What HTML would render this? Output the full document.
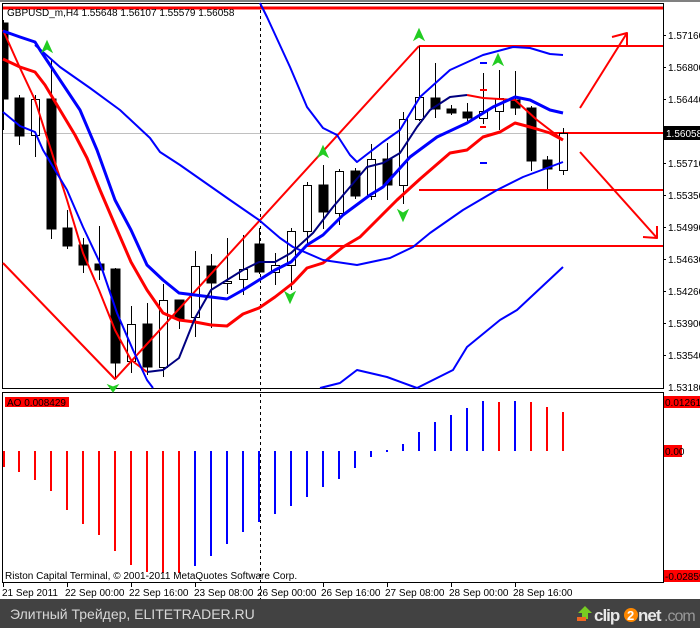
<!DOCTYPE html>
<html><head><meta charset="utf-8"><style>
html,body{margin:0;padding:0;background:#fff;width:700px;height:628px;overflow:hidden}
svg{display:block}
text{font-family:"Liberation Sans",sans-serif;font-size:10px}
</style></head><body>
<svg width="700" height="628" viewBox="0 0 700 628" xmlns="http://www.w3.org/2000/svg">
<rect x="0" y="0" width="700" height="628" fill="#fff"/>
<rect x="0" y="0" width="700" height="2" fill="#808080"/>
<rect x="2.5" y="3.5" width="661" height="385" fill="none" stroke="#000"/>
<rect x="2.5" y="392.5" width="661" height="190" fill="none" stroke="#000"/>
<line x1="3" y1="133.5" x2="663" y2="133.5" stroke="#c0c0c0"/>
<line x1="260.5" y1="4" x2="260.5" y2="600" stroke="#000" stroke-dasharray="3,3"/>
<g stroke="#f00" stroke-width="2" fill="none">
<line x1="3" y1="8" x2="663" y2="8" stroke-width="3"/>
<line x1="419" y1="46" x2="663" y2="46"/>
<line x1="548" y1="133" x2="663" y2="133"/>
<line x1="419" y1="190" x2="663" y2="190"/>
<line x1="307" y1="246" x2="663" y2="246"/>
</g>
<g stroke="#000" stroke-width="1">
<line x1="3.5" y1="20" x2="3.5" y2="130"/><rect x="3" y="23" width="5" height="76" fill="#000"/>
<line x1="19.5" y1="95" x2="19.5" y2="145"/><rect x="15" y="98" width="9" height="38" fill="#000"/>
<line x1="35.5" y1="95" x2="35.5" y2="157"/><rect x="31.5" y="99.5" width="8" height="36" fill="#fff"/>
<line x1="51.5" y1="60" x2="51.5" y2="239"/><rect x="47" y="99" width="9" height="130" fill="#000"/>
<line x1="67.5" y1="210" x2="67.5" y2="249"/><rect x="63" y="228" width="9" height="18" fill="#000"/>
<line x1="83.5" y1="238" x2="83.5" y2="273"/><rect x="79" y="245" width="9" height="20" fill="#000"/>
<line x1="99.5" y1="226" x2="99.5" y2="280"/><rect x="95" y="264" width="9" height="6" fill="#000"/>
<line x1="115.5" y1="268" x2="115.5" y2="379"/><rect x="111" y="269" width="9" height="94" fill="#000"/>
<line x1="131.5" y1="306" x2="131.5" y2="373"/><rect x="127.5" y="324.5" width="8" height="37" fill="#fff"/>
<line x1="147.5" y1="303" x2="147.5" y2="375"/><rect x="143" y="324" width="9" height="43" fill="#000"/>
<line x1="163.5" y1="284" x2="163.5" y2="377"/><rect x="159.5" y="300.5" width="8" height="67" fill="#fff"/>
<line x1="179.5" y1="300" x2="179.5" y2="329"/><rect x="175" y="300" width="9" height="19" fill="#000"/>
<line x1="195.5" y1="251" x2="195.5" y2="337"/><rect x="191.5" y="266.5" width="8" height="51" fill="#fff"/>
<line x1="211.5" y1="254" x2="211.5" y2="328"/><rect x="207" y="266" width="9" height="17" fill="#000"/>
<line x1="227.5" y1="238" x2="227.5" y2="294"/><rect x="223.5" y="281.5" width="8" height="2" fill="#fff"/>
<line x1="243.5" y1="235" x2="243.5" y2="295"/><rect x="239.5" y="269.5" width="8" height="10" fill="#fff"/>
<line x1="259.5" y1="228" x2="259.5" y2="274"/><rect x="255" y="244" width="9" height="28" fill="#000"/>
<line x1="275.5" y1="253" x2="275.5" y2="285"/><rect x="271.5" y="265.5" width="8" height="7" fill="#fff"/>
<line x1="291.5" y1="228" x2="291.5" y2="290"/><rect x="287.5" y="231.5" width="8" height="34" fill="#fff"/>
<line x1="307.5" y1="182" x2="307.5" y2="245"/><rect x="303.5" y="185.5" width="8" height="46" fill="#fff"/>
<line x1="323.5" y1="165" x2="323.5" y2="229"/><rect x="319" y="185" width="9" height="27" fill="#000"/>
<line x1="339.5" y1="169" x2="339.5" y2="225"/><rect x="335.5" y="171.5" width="8" height="42" fill="#fff"/>
<line x1="355.5" y1="168" x2="355.5" y2="199"/><rect x="351" y="171" width="9" height="25" fill="#000"/>
<line x1="371.5" y1="144" x2="371.5" y2="200"/><rect x="367.5" y="159.5" width="8" height="37" fill="#fff"/>
<line x1="387.5" y1="143" x2="387.5" y2="200"/><rect x="383" y="159" width="9" height="26" fill="#000"/>
<line x1="403.5" y1="112" x2="403.5" y2="204"/><rect x="399.5" y="119.5" width="8" height="66" fill="#fff"/>
<line x1="419.5" y1="46" x2="419.5" y2="121"/><rect x="415.5" y="97.5" width="8" height="22" fill="#fff"/>
<line x1="435.5" y1="63" x2="435.5" y2="118"/><rect x="431" y="98" width="9" height="11" fill="#000"/>
<line x1="451.5" y1="105" x2="451.5" y2="115"/><rect x="447" y="109" width="9" height="4" fill="#000"/>
<line x1="467.5" y1="103" x2="467.5" y2="121"/><rect x="463" y="112" width="9" height="6" fill="#000"/>
<line x1="483.5" y1="73" x2="483.5" y2="124"/><rect x="479.5" y="111.5" width="8" height="7" fill="#fff"/>
<line x1="499.5" y1="70" x2="499.5" y2="130"/><rect x="495.5" y="98.5" width="8" height="13" fill="#fff"/>
<line x1="515.5" y1="71" x2="515.5" y2="115"/><rect x="511" y="100" width="9" height="8" fill="#000"/>
<line x1="531.5" y1="106" x2="531.5" y2="171"/><rect x="527" y="108" width="9" height="53" fill="#000"/>
<line x1="547.5" y1="156" x2="547.5" y2="189"/><rect x="543" y="160" width="9" height="9" fill="#000"/>
<line x1="563.5" y1="128" x2="563.5" y2="175"/><rect x="559.5" y="133.5" width="8" height="37" fill="#fff"/>
</g>
<g fill="none" stroke-linejoin="round">
<polyline stroke="#f00" stroke-width="2" points="3,263 115,379 419,46"/>
<polyline stroke="#f00" stroke-width="2" points="3,30 20,68 35,100 51,150 67,200 83,253 99,290 115,330 131,360 147,372"/>
<polyline stroke="#f00" stroke-width="3" points="3,59 20,67 35,72 45,85 60,110 75,135 87,158 100,190 115,225 131,262 147,290 163,313 179,320 195,322 211,325 227,326 243,314 259,308 275,297 293,283 307,268 323,263 343,247 360,237 380,217 397,200 420,179 450,153 467,150 483,137 500,132 515,123 530,127 550,133 563,140"/>
<polyline stroke="#f00" stroke-width="2" points="467,95 483,98 515,100 537,120 563,140"/>
<polyline stroke="#00f" stroke-width="3" points="3,31 20,37 35,42 40,50 60,80 80,110 97,150 115,200 131,230 147,265 163,280 179,293 195,295 211,297 227,299 243,290 259,280 275,270 291,262 307,245 323,235 343,215 370,195 383,187 410,157 437,137 467,123 493,107 515,97 530,100 550,110 563,113"/>
<polyline stroke="#00f" stroke-width="2" points="3,112 20,126 35,132 43,150 67,190 83,227 100,263 117,313 133,350 147,380 153,388"/>
<polyline stroke="#00f" stroke-width="2" points="35,45 60,67 90,88 120,110 150,138 160,152 180,165 230,200 259,220 280,238 293,247 323,260 357,265 390,258 413,247 430,233 463,210 497,190 523,177 563,162"/>
<polyline stroke="#00f" stroke-width="2" points="260,3 267,17 290,67 307,107 323,128 337,135 350,155 357,162 383,142 400,130 420,97 450,70 483,55 513,47 530,48 550,54 563,55"/>
<polyline stroke="#00f" stroke-width="2" points="320,388 340,383 357,370 387,377 417,388 453,370 467,347 500,320 517,310 563,267"/>
<polyline stroke="#000080" stroke-width="2" points="147,372 163,370 179,358 195,318 211,290 227,280 243,270 259,262 275,262 291,253 313,233 333,207 350,187 367,167 383,163 400,153 417,127 430,110 450,97 467,95"/>
<polyline stroke="#f00" stroke-width="2" points="580,108 627,33"/>
<polyline stroke="#f00" stroke-width="2" points="612,37 627,33 627,47"/>
<polyline stroke="#f00" stroke-width="2" points="580,152 657,238"/>
<polyline stroke="#f00" stroke-width="2" points="643,237 657,238 657,226"/>
</g>
<g fill="#2c2" stroke="#2c2">
<path d="M47,41 L42,52 L47,49 L52,52 Z"/>
<path d="M323,146 L318,157 L323,154 L328,157 Z"/>
<path d="M419,29 L414,40 L419,37 L424,40 Z"/>
<path d="M498,54 L493,65 L498,62 L503,65 Z"/>
<path d="M290,303 L285,292 L290,295 L295,292 Z"/>
<path d="M403,221 L398,210 L403,213 L408,210 Z"/>
<path d="M113,392 L108,385 L113,387 L118,385 Z"/>
</g>
<g stroke="#f00" stroke-width="2"><line x1="480" y1="90" x2="487" y2="90"/><line x1="480" y1="127" x2="486" y2="127"/></g>
<g stroke="#00f" stroke-width="2"><line x1="480" y1="63" x2="487" y2="63"/><line x1="480" y1="163" x2="487" y2="163"/></g>
<text x="7" y="16" fill="#000">GBPUSD_m,H4  1.55648 1.56107 1.55579 1.56058</text>
<g fill="#000">
<text x="668" y="39">1.57160</text>
<text x="668" y="71">1.56800</text>
<text x="668" y="103">1.56440</text>
<text x="668" y="167">1.55710</text>
<text x="668" y="199">1.55350</text>
<text x="668" y="231">1.54990</text>
<text x="668" y="263">1.54630</text>
<text x="668" y="295">1.54260</text>
<text x="668" y="327">1.53900</text>
<text x="668" y="359">1.53540</text>
<text x="668" y="391">1.53180</text>
</g>
<g stroke="#000"><line x1="663" y1="35.5" x2="666" y2="35.5"/><line x1="663" y1="67.5" x2="666" y2="67.5"/><line x1="663" y1="99.5" x2="666" y2="99.5"/><line x1="663" y1="163.5" x2="666" y2="163.5"/><line x1="663" y1="195.5" x2="666" y2="195.5"/><line x1="663" y1="227.5" x2="666" y2="227.5"/><line x1="663" y1="259.5" x2="666" y2="259.5"/><line x1="663" y1="291.5" x2="666" y2="291.5"/><line x1="663" y1="323.5" x2="666" y2="323.5"/><line x1="663" y1="355.5" x2="666" y2="355.5"/></g>
<rect x="664" y="126" width="36" height="14" fill="#000"/>
<text x="666" y="137" fill="#fff">1.56058</text>
<rect x="5" y="397" width="64" height="10" fill="#f00"/>
<text x="7" y="406" fill="#000">AO 0.008429</text>
<rect x="664" y="396" width="36" height="12" fill="#f00"/><text x="665" y="406" fill="#000">0.012615</text>
<rect x="664" y="445" width="18" height="12" fill="#f00"/><text x="665" y="455" fill="#000">0.00</text>
<rect x="664" y="570" width="36" height="12" fill="#f00"/><text x="665" y="580" fill="#000">-0.02859</text>
<g stroke-width="2">
<g stroke="#f00">
<line x1="4" y1="451" x2="4" y2="467"/><line x1="19" y1="451" x2="19" y2="472"/><line x1="35" y1="451" x2="35" y2="480"/><line x1="51" y1="451" x2="51" y2="491"/><line x1="67" y1="451" x2="67" y2="510"/><line x1="83" y1="451" x2="83" y2="524"/><line x1="99" y1="451" x2="99" y2="535"/><line x1="115" y1="451" x2="115" y2="551"/><line x1="131" y1="451" x2="131" y2="565"/><line x1="147" y1="451" x2="147" y2="572"/><line x1="163" y1="451" x2="163" y2="573"/><line x1="179" y1="451" x2="179" y2="573"/>
<line x1="499" y1="451" x2="499" y2="402"/><line x1="531" y1="451" x2="531" y2="402"/><line x1="547" y1="451" x2="547" y2="407"/><line x1="563" y1="451" x2="563" y2="412"/>
</g>
<g stroke="#00f">
<line x1="195" y1="451" x2="195" y2="566"/><line x1="211" y1="451" x2="211" y2="556"/><line x1="227" y1="451" x2="227" y2="544"/><line x1="243" y1="451" x2="243" y2="532"/><line x1="259" y1="451" x2="259" y2="522"/><line x1="275" y1="451" x2="275" y2="514"/><line x1="291" y1="451" x2="291" y2="506"/><line x1="307" y1="451" x2="307" y2="497"/><line x1="323" y1="451" x2="323" y2="487"/><line x1="339" y1="451" x2="339" y2="479"/><line x1="355" y1="451" x2="355" y2="468"/><line x1="371" y1="451" x2="371" y2="457"/><line x1="387" y1="450" x2="387" y2="452"/>
<line x1="403" y1="451" x2="403" y2="444"/><line x1="419" y1="451" x2="419" y2="432"/><line x1="435" y1="451" x2="435" y2="422"/><line x1="451" y1="451" x2="451" y2="415"/><line x1="467" y1="451" x2="467" y2="408"/><line x1="483" y1="451" x2="483" y2="401"/><line x1="515" y1="451" x2="515" y2="401"/>
</g>
</g>
<text x="5" y="579" fill="#000">Riston Capital Terminal, © 2001-2011 MetaQuotes Software Corp.</text>
<g stroke="#000"><line x1="3.5" y1="583" x2="3.5" y2="587"/><line x1="67.5" y1="583" x2="67.5" y2="587"/><line x1="131.5" y1="583" x2="131.5" y2="587"/><line x1="195.5" y1="583" x2="195.5" y2="587"/><line x1="323.5" y1="583" x2="323.5" y2="587"/><line x1="387.5" y1="583" x2="387.5" y2="587"/><line x1="451.5" y1="583" x2="451.5" y2="587"/><line x1="515.5" y1="583" x2="515.5" y2="587"/></g>
<g fill="#000">
<text x="2" y="596">21 Sep 2011</text>
<text x="65" y="596">22 Sep 00:00</text>
<text x="129" y="596">22 Sep 16:00</text>
<text x="194" y="596">23 Sep 08:00</text>
<text x="257" y="596">26 Sep 00:00</text>
<text x="321" y="596">26 Sep 16:00</text>
<text x="385" y="596">27 Sep 08:00</text>
<text x="449" y="596">28 Sep 00:00</text>
<text x="513" y="596">28 Sep 16:00</text>
</g>
<rect x="0" y="599" width="700" height="29" fill="#424242"/>
<text x="10" y="619" fill="#d8d8d8" style="font-size:14px;font-family:'Liberation Sans',sans-serif">Элитный Трейдер, ELITETRADER.RU</text>
<path d="M585,606 L578,613 L582,613 L582,619 L588,619 L588,613 L592,613 Z" fill="#7c2"/>
<rect x="577" y="617" width="9" height="4" fill="#e62"/>
<text x="594" y="621" fill="#e8e8e8" style="font-size:17px;font-weight:bold;font-family:'Liberation Sans',sans-serif;letter-spacing:-1px">clip</text>
<circle cx="631" cy="615" r="7" fill="#f80"/>
<text x="627" y="620" fill="#fff" style="font-size:13px;font-weight:bold;font-family:'Liberation Sans',sans-serif">2</text>
<text x="638" y="621" fill="#e8e8e8" style="font-size:17px;font-weight:bold;font-family:'Liberation Sans',sans-serif;letter-spacing:-1px">net</text>
<text x="664" y="621" fill="#999" style="font-size:16px;font-family:'Liberation Sans',sans-serif;letter-spacing:-1px">.com</text>
</svg>
</body></html>
